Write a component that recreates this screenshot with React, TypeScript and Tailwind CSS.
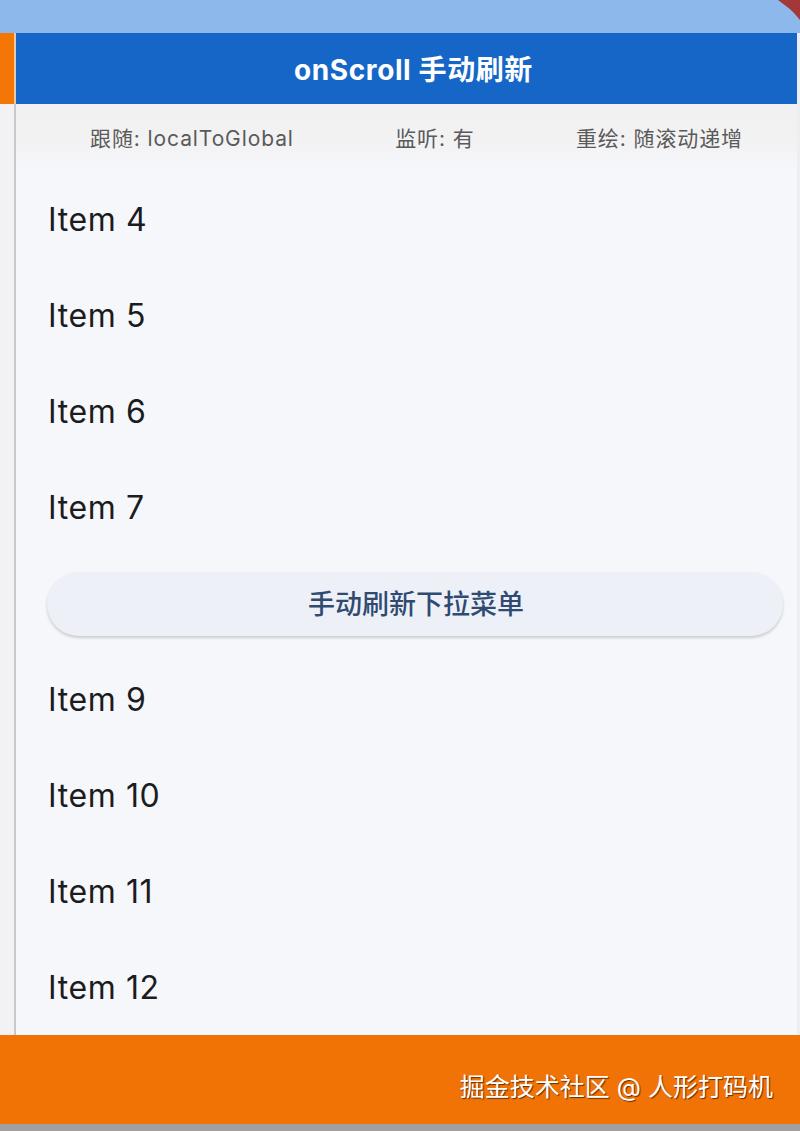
import React from "react";

const font = { fontFamily: 'Inter, "Noto Sans CJK SC", sans-serif' };

export default function App() {
  const items = ["Item 4", "Item 5", "Item 6", "Item 7", "BUTTON", "Item 9", "Item 10", "Item 11", "Item 12"];
  return (
    <div className="w-[800px] h-[1131px] flex flex-col overflow-hidden bg-[#f6f7fb]" style={font}>
      <div className="h-[33px] bg-[#8db8ec] relative shrink-0">
        <svg className="absolute right-0 top-0" width="24" height="20" viewBox="0 0 24 20">
          <path d="M2 0 H24 V20 L18 13 C12 7 6 3 2 0 Z" fill="#a23838" />
        </svg>
      </div>
      <div className="flex flex-1 min-h-0 overflow-hidden">
        <div className="w-[16px] flex flex-col shrink-0">
          <div className="h-[71px] shrink-0 bg-[#f37606] border-r-2 border-[#e9c8a8]" />
          <div className="flex-1 bg-[#f2f2f5] border-r-2 border-[#c9c9cd]" />
        </div>
        <div className="flex-1 flex flex-col min-w-0 border-r-[3px] border-[#eceef2]">
          <div className="h-[71px] shrink-0 bg-[#1666c8] flex items-center justify-center text-white font-bold text-[28px] tracking-[0.6px] pl-[14px] pt-[2px]">
            onScroll 手动刷新
          </div>
          <div className="h-[68px] shrink-0 bg-gradient-to-b from-[#f1f1f1] via-[#f2f2f3] to-[#f6f7fb] flex items-center justify-between text-[#5a5a5a] text-[21px] tracking-[0.9px] pl-[74px] pr-[54px] pt-[1px]">
            <span>跟随: localToGlobal</span>
            <span>监听: 有</span>
            <span>重绘: 随滚动递增</span>
          </div>
          <div className="flex flex-col shrink-0">
            {items.map((it) =>
              it === "BUTTON" ? (
                <div key={it} className="h-[96px] flex items-center pl-[31px] pr-[14px]">
                  <div className="w-full h-[64px] rounded-full bg-[#eef0f8] shadow-[0_2px_3px_rgba(0,0,0,0.18)] flex items-center justify-center text-[#2f4b72] text-[27px] font-medium pl-[2px] pt-[2px]">
                    手动刷新下拉菜单
                  </div>
                </div>
              ) : (
                <div key={it} className="h-[96px] flex items-center pl-[32px] text-[#1c1c1e] text-[32px] tracking-[0.6px]">
                  {it}
                </div>
              )
            )}
          </div>
        </div>
      </div>
      <div className="h-[89px] bg-[#f17306] shrink-0 flex items-center justify-end pr-[27px] pt-[16px]">
        <span
          className="text-white text-[25px]"
          style={{ textShadow: "1px 1px 1px rgba(60,30,0,0.8)" }}
        >
          掘金技术社区 @ 人形打码机
        </span>
      </div>
      <div className="h-[7px] bg-[#a0a0a0] shrink-0" />
    </div>
  );
}
